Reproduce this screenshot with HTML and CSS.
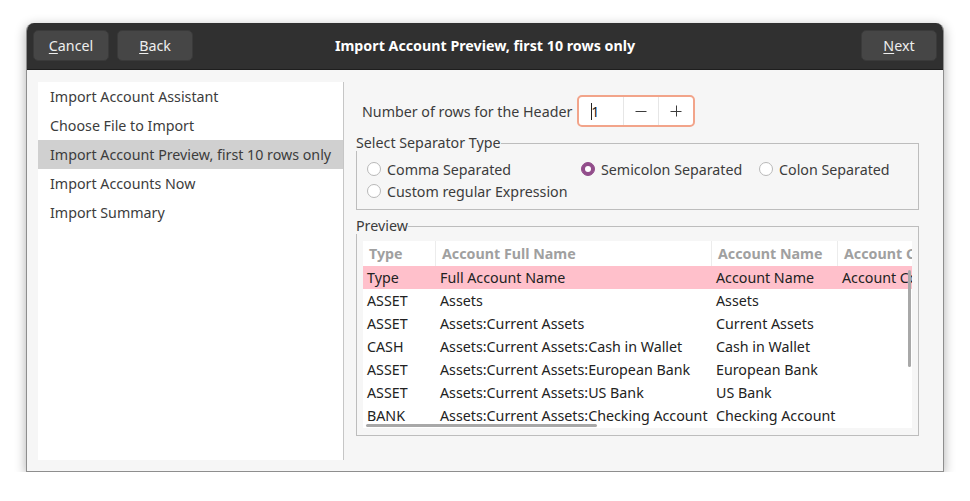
FILE: index.html
```html
<!DOCTYPE html>
<html>
<head>
<meta charset="utf-8">
<link rel="stylesheet" href="styles.css">
</head>
<body>
<div class="window">
  <div class="headerbar">
    <div class="hgroup">
      <button class="hbtn"><u>C</u>ancel</button>
      <button class="hbtn"><u>B</u>ack</button>
    </div>
    <div class="title">Import Account Preview, first 10 rows only</div>
    <div class="hgroup end">
      <button class="hbtn"><u>N</u>ext</button>
    </div>
  </div>
  <div class="content">
    <div class="sidebar">
      <div class="sitem">Import Account Assistant</div>
      <div class="sitem">Choose File to Import</div>
      <div class="sitem selected">Import Account Preview, first 10 rows only</div>
      <div class="sitem">Import Accounts Now</div>
      <div class="sitem">Import Summary</div>
    </div>
    <div class="main">
      <div class="hdr-row">
        <span class="lbl">Number of rows for the Header</span>
        <div class="spin">
          <div class="spin-entry"><span class="caret"></span>1</div>
          <div class="spin-btn">
            <svg width="12" height="12" viewBox="0 0 12 12"><path d="M0.5 6.5h11" stroke="#3c3c3c" stroke-width="1"/></svg>
          </div>
          <div class="spin-btn">
            <svg width="12" height="12" viewBox="0 0 12 12"><path d="M0.5 6.5h11M6.5 0.5v11" stroke="#3c3c3c" stroke-width="1"/></svg>
          </div>
        </div>
      </div>
      <fieldset class="frame sep-frame">
        <legend>Select Separator Type</legend>
        <div class="radios">
          <div class="radio"><span class="circle"></span>Comma Separated</div>
          <div class="radio"><span class="circle checked"></span>Semicolon Separated</div>
          <div class="radio"><span class="circle"></span>Colon Separated</div>
          <div class="radio"><span class="circle"></span>Custom regular Expression</div>
        </div>
      </fieldset>
      <fieldset class="frame preview-frame">
        <legend>Preview</legend>
        <div class="tree">
          <div class="trow thead">
            <div class="c c1">Type</div>
            <div class="c c2">Account Full Name</div>
            <div class="c c3">Account Name</div>
            <div class="c c4">Account Code</div>
          </div>
          <div class="trow pink">
            <div class="c c1">Type</div>
            <div class="c c2">Full Account Name</div>
            <div class="c c3">Account Name</div>
            <div class="c c4">Account Code</div>
          </div>
          <div class="trow"><div class="c c1">ASSET</div><div class="c c2">Assets</div><div class="c c3">Assets</div><div class="c c4"></div></div>
          <div class="trow"><div class="c c1">ASSET</div><div class="c c2">Assets:Current Assets</div><div class="c c3">Current Assets</div><div class="c c4"></div></div>
          <div class="trow"><div class="c c1">CASH</div><div class="c c2">Assets:Current Assets:Cash in Wallet</div><div class="c c3">Cash in Wallet</div><div class="c c4"></div></div>
          <div class="trow"><div class="c c1">ASSET</div><div class="c c2">Assets:Current Assets:European Bank</div><div class="c c3">European Bank</div><div class="c c4"></div></div>
          <div class="trow"><div class="c c1">ASSET</div><div class="c c2">Assets:Current Assets:US Bank</div><div class="c c3">US Bank</div><div class="c c4"></div></div>
          <div class="trow"><div class="c c1">BANK</div><div class="c c2">Assets:Current Assets:Checking Account</div><div class="c c3">Checking Account</div><div class="c c4"></div></div>
          <div class="vscroll"></div>
          <div class="hscroll"></div>
        </div>
      </fieldset>
    </div>
  </div>
</div>
</body>
</html>
```
FILE: styles.css
```css
html, body {
  margin: 0;
  padding: 0;
  background: #ffffff;
}
body {
  font-family: "Noto Sans", "DejaVu Sans", sans-serif;
  font-size: 14.25px;
  color: #3c3c3c;
}
.window {
  margin: 23px 0 0 26px;
  width: 918px;
  height: 449px;
  box-sizing: border-box;
  border: 1px solid #8e8e8e;
  border-top: none;
  border-radius: 8px 8px 0 0;
  background: #f6f6f6;
  box-shadow: 0 3px 12px rgba(0,0,0,0.32);
  display: flex;
  flex-direction: column;
  overflow: hidden;
}
.headerbar {
  height: 45px;
  flex: none;
  box-sizing: content-box;
  background: #303030;
  border-bottom: 1px solid #1e1e1e;
  display: grid;
  grid-template-columns: 1fr auto 1fr;
  align-items: center;
  padding: 0 6px 1px 6px;
}
.hgroup {
  display: flex;
  gap: 8px;
}
.hgroup.end { justify-content: flex-end; }
.hbtn {
  width: 76px;
  height: 31px;
  background: #464646;
  border: 1px solid #3a3a3a;
  border-radius: 5px;
  color: #eeeeee;
  font-family: inherit;
  font-size: 14.25px;
  padding: 0;
}
.hbtn u { text-decoration-thickness: 1px; text-underline-offset: 2px; }
.title {
  text-align: center;
  color: #ffffff;
  font-weight: bold;
  font-size: 14.25px;
}
.content {
  flex: 1;
  display: flex;
  padding: 12px 24px 11px 11px;
  min-height: 0;
}
.sidebar {
  width: 305px;
  background: #ffffff;
  border-right: 1px solid #c6c6c6;
  flex: none;
}
.sitem {
  height: 29px;
  line-height: 29px;
  padding-left: 12px;
  white-space: nowrap;
}
.sitem.selected {
  background: #d0d0d0;
}
.main {
  flex: 1;
  min-width: 0;
  padding-left: 12px;
  display: flex;
  flex-direction: column;
}
.hdr-row {
  display: flex;
  align-items: center;
  margin-top: 13px;
  padding-left: 6px;
  gap: 5px;
}
.spin {
  display: flex;
  height: 32px;
  box-sizing: border-box;
  border: 2px solid #f2a48a;
  border-radius: 5px;
  background: #ffffff;
  overflow: hidden;
}
.spin-entry {
  width: 45px;
  padding-left: 12px;
  box-sizing: border-box;
  display: flex;
  align-items: center;
  color: #222;
  border-right: 1px solid #e6e6e6;
}
.caret {
  display: inline-block;
  width: 1px;
  height: 17px;
  background: #222;
  margin-right: -1px;
}
.spin-btn {
  width: 34px;
  display: flex;
  align-items: center;
  justify-content: center;
  border-right: 1px solid #e6e6e6;
}
.spin-btn:last-child { border-right: none; }
.frame {
  margin: 0;
  padding: 0;
  border: 1px solid #bdbdbd;
  min-width: 0;
  width: 563px;
  box-sizing: border-box;
}
.frame legend {
  padding: 0;
  margin-left: -1px;
  line-height: 16px;
}
.sep-frame {
  margin-top: 8px;
  height: 75px;
}
.radios {
  display: grid;
  grid-template-columns: 214px 178px auto;
  grid-template-rows: 22px 22px;
  padding: 7px 0 0 10px;
}
.radio {
  display: flex;
  align-items: center;
  white-space: nowrap;
}
.circle {
  width: 14px;
  height: 14px;
  box-sizing: border-box;
  border: 1px solid #b8b8b8;
  border-radius: 50%;
  background: #ffffff;
  margin-right: 6px;
  flex: none;
}
.circle.checked {
  background: #924d8b;
  border-color: #924d8b;
  position: relative;
}
.circle.checked::after {
  content: "";
  position: absolute;
  left: 3px;
  top: 3px;
  width: 6px;
  height: 6px;
  border-radius: 50%;
  background: #ffffff;
}
.preview-frame {
  margin-top: 8px;
  height: 218px;
  padding: 7px 6px 6px 6px;
}
.preview-frame legend {
  margin-left: -7px;
}
.tree {
  position: relative;
  background: #ffffff;
  height: 187px;
  flex: none;
  overflow: hidden;
}
.trow {
  display: flex;
  height: 23px;
  line-height: 24px;
  white-space: nowrap;
  color: #222222;
}
.trow.thead {
  height: 25px;
  line-height: 25px;
  color: #a0a0a0;
  font-weight: bold;
}
.trow.pink { background: #ffc0cb; }
.c {
  flex: none;
  overflow: hidden;
  padding-left: 4px;
  box-sizing: border-box;
}
.thead .c { padding-left: 6px; border-right: 1px solid #ececec; }
.c1 { width: 73px; }
.c2 { width: 276px; }
.c3 { width: 126px; }
.c4 { width: 120px; }
.vscroll {
  position: absolute;
  right: 1px;
  top: 29px;
  width: 3px;
  height: 97px;
  background: #a8a8a8;
  border-radius: 2px;
}
.hscroll {
  position: absolute;
  left: 3px;
  bottom: 1px;
  width: 231px;
  height: 3px;
  background: #a8a8a8;
  border-radius: 2px;
}
```
